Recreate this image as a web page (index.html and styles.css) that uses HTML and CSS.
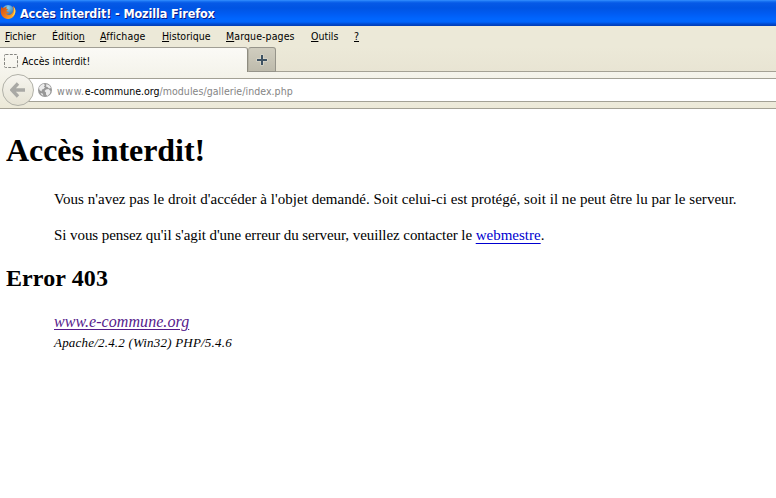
FILE: index.html
```
<!DOCTYPE html>
<html lang="fr">
<head>
<meta charset="utf-8">
<title>Accès interdit!</title>
<link rel="stylesheet" href="styles.css">
</head>
<body>
<header class="titlebar">
  <svg class="logo" width="16" height="16" viewBox="0 0 16 16">
    <defs>
      <linearGradient id="fox" x1="0" y1="0" x2="1" y2="1"><stop offset="0" stop-color="#c94a14"/><stop offset=".55" stop-color="#ee7a1c"/><stop offset="1" stop-color="#ffc93c"/></linearGradient>
      <radialGradient id="globe" cx=".5" cy=".2" r=".8"><stop offset="0" stop-color="#7fd0f4"/><stop offset="1" stop-color="#1c4f9c"/></radialGradient>
    </defs>
    <circle cx="8" cy="7.5" r="6.5" fill="url(#globe)"/>
    <path d="M1.6 2.2C.4 5 .2 8.500 1.500 11c2.500 4.600 9 5.200 12 1.500 2-2.500 2.300-5.500 1.200-8.500-.5-1.100-1.200-1.800-2-2.300.8 1.800 1 4 .3 6-.8 2.400-3 3.600-5 3.100-1-.2-1.700-.8-2-1.500 1.200.4 2.300 0 3-.9-.9-.6-2-.5-2.700-1.300.2-.9.9-1.200 1.700-1.700-.1-.8-1.400-.5-2-.9.200-.8.700-1.400 1.400-1.800-1.200-.2-2.200.3-2.900 1-.9-.1-1.700-.1-2.300.2-.4-.4-.6-1.100-.6-1.700z" fill="url(#fox)"/>
    <path d="M13.600 3c1.200 3.600.6 7.400-2.200 9.600 3-.8 4.200-3.600 4-6.200-.1-1.400-.9-2.700-1.800-3.400z" fill="#ffd84f"/>
  </svg>
  <span class="window-title">Accès interdit! - Mozilla Firefox</span>
</header>
<nav class="menubar">
  <span class="m1"><u>F</u>ichier</span><span class="m2">Éditio<u>n</u></span><span class="m3"><u>A</u>ffichage</span><span class="m4"><u>H</u>istorique</span><span class="m5"><u>M</u>arque-pages</span><span class="m6"><u>O</u>utils</span><span><u>?</u></span>
</nav>
<div class="tabstrip">
  <div class="tab">
    <svg width="14" height="14" viewBox="0 0 14 14"><rect x=".5" y=".5" width="13" height="13" rx="1" fill="none" stroke="#858580" stroke-dasharray="3 1.300"/></svg>
    <span class="tab-title">Accès interdit!</span>
  </div>
  <div class="newtab">
    <svg width="12" height="12" viewBox="0 0 12 12"><path d="M4.500.5h3v4h4v3h-4v4h-3v-4h-4v-3h4z" fill="#e2e0d4"/><path d="M5 1h2v4h4v2H7v4H5V7H1V5h4z" fill="#3e5263"/></svg>
  </div>
</div>
<div class="navbar">
  <div class="urlbar">
    <svg width="14" height="14" viewBox="0 0 14 14"><circle cx="7" cy="7" r="7" fill="#979797"/><path d="M1 4.500 3 2l2.500-1.200L7 2 5.800 3.500 7 4.500 5.500 6 4 6.500l-.5 2L1.500 7zM8.500 1l3 1.500L13 5l-2 .5L9.500 4 8 3.500zM8 6.500l2.500-.5 2 2-.5 2.500L9.500 13 8 11.500V9.500L6.500 8zM2.500 10l2 .5 1 2-1.500-.2z" fill="#ececec"/></svg>
    <span class="url"><span class="sub">www.</span><span class="domain">e-commune.org</span><span class="path">/modules/gallerie/index.php</span></span>
  </div>
  <div class="back">
    <svg width="16" height="16" viewBox="0 0 16 16"><path d="M8 1.500 1.800 8 8 14.500M2.500 8H15" fill="none" stroke="#a9a9a5" stroke-width="3.400"/></svg>
  </div>
</div>
<main>
  <h1><span>Accès interdit!</span></h1>
  <p class="p1">Vous n'avez pas le droit d'accéder à l'objet demandé. Soit celui-ci est protégé, soit il ne peut être lu par le serveur.</p>
  <p class="p2">Si vous pensez qu'il s'agit d'une erreur du serveur, veuillez contacter le <a>webmestre</a>.</p>
  <h2>Error 403</h2>
  <address><a class="visited">www.e-commune.org</a><span class="server">Apache/2.4.2 (Win32) PHP/5.4.6</span></address>
</main>
</body>
</html>
```

FILE: styles.css
```
* { box-sizing: border-box; }
body {
  margin: 0;
  height: 498px;
  overflow: hidden;
  background: #fff;
  color: #000;
  font-family: "DejaVu Sans Condensed", "DejaVu Sans", sans-serif;
  font-stretch: condensed;
  font-size: 10.5px;
  white-space: nowrap;
}
svg { display: block; flex: none; }
.titlebar {
  height: 26px;
  display: flex;
  align-items: center;
  background: linear-gradient(#3a93ff 0, #1b77f5 1px, #0659e6 3px, #0054e3 8px, #005cf3 14px, #0066ff 19px, #0064fb 22px, #004ad0 24px, #003cb4 26px);
}
.logo { margin-bottom: 2px; }
.window-title {
  margin: 1px 0 0 4px;
  color: #fff;
  font-weight: bold;
  font-size: 12.5px;
  letter-spacing: -0.12px;
  text-shadow: 1px 1px 0 #0a1883;
}
.menubar {
  height: 21px;
  padding-left: 5px;
  display: flex;
  line-height: 20px;
  background: #ece9d8;
}
.menubar u { text-underline-offset: 1px; }
.m1 { width: 47px; }
.m2 { width: 48px; }
.m3 { width: 62px; letter-spacing: 0.15px; }
.m4 { width: 64px; }
.m5 { width: 85px; letter-spacing: 0.1px; }
.m6 { width: 43px; }
.tabstrip {
  height: 25px;
  display: flex;
  background: linear-gradient(#ece9d8, #e8e4d3);
  box-shadow: inset 0 -1px 0 #a4a194;
}
.tab {
  width: 248px;
  display: flex;
  align-items: center;
  padding: 1px 0 0 4px;
  border-top: 1px solid #a09e94;
  border-right: 1px solid #8e8c80;
  border-radius: 0 3px 0 0;
  background: linear-gradient(#fbfaf6, #f5f4ec);
}
.tab-title { margin-left: 4px; }
.newtab {
  width: 28px;
  display: flex;
  align-items: center;
  justify-content: center;
  border: 1px solid #96948a;
  border-left-color: #b4b1a4;
  border-radius: 3px 3px 0 0;
  background: linear-gradient(#d0cdbf, #bebbac);
}
.navbar {
  position: relative;
  height: 37px;
  padding-top: 6px;
  border-bottom: 1px solid #a5a295;
  background: linear-gradient(#f5f4ec, #ece9d8);
}
.urlbar {
  height: 24px;
  margin-left: 18px;
  padding-left: 20px;
  display: flex;
  align-items: center;
  border: 1px solid #a3a195;
  border-width: 1px 0;
  background: #fff;
}
.url { margin: 2px 0 0 5px; color: #858585; }
.sub { letter-spacing: 0.6px; }
.domain { color: #000; }
.path { letter-spacing: 0.05px; }
.back {
  position: absolute;
  left: 2px;
  top: 2px;
  width: 32px;
  height: 32px;
  display: flex;
  align-items: center;
  justify-content: center;
  border: 1px solid #b1b1a8;
  border-radius: 50%;
  background: linear-gradient(#f6f5ef, #e6e3d4);
}
main {
  padding: 23px 0 0 6px;
  font-family: "Liberation Serif", serif;
}
h1 { margin: 0; font-size: 32px; line-height: 37px; letter-spacing: -0.05px; }
p { margin: 0 0 0 48px; font-size: 15px; line-height: 18px; }
.p1 { margin-top: 21px; letter-spacing: 0.035px; }
.p2 { margin-top: 18px; letter-spacing: -0.07px; }
.p2 a { letter-spacing: 0; text-underline-offset: 3px; }
h2 { margin: 20px 0 0; font-size: 24px; line-height: 28px; letter-spacing: 0.1px; }
address { margin: 21px 0 0 48px; font-size: 16px; line-height: 18px; }
a { color: #0000d0; text-decoration: underline; text-underline-offset: 2px; }
.visited { color: #551a8b; letter-spacing: 0.06px; }
.server { display: block; margin-top: 3px; font-size: 13px; letter-spacing: 0.2px; }
```
